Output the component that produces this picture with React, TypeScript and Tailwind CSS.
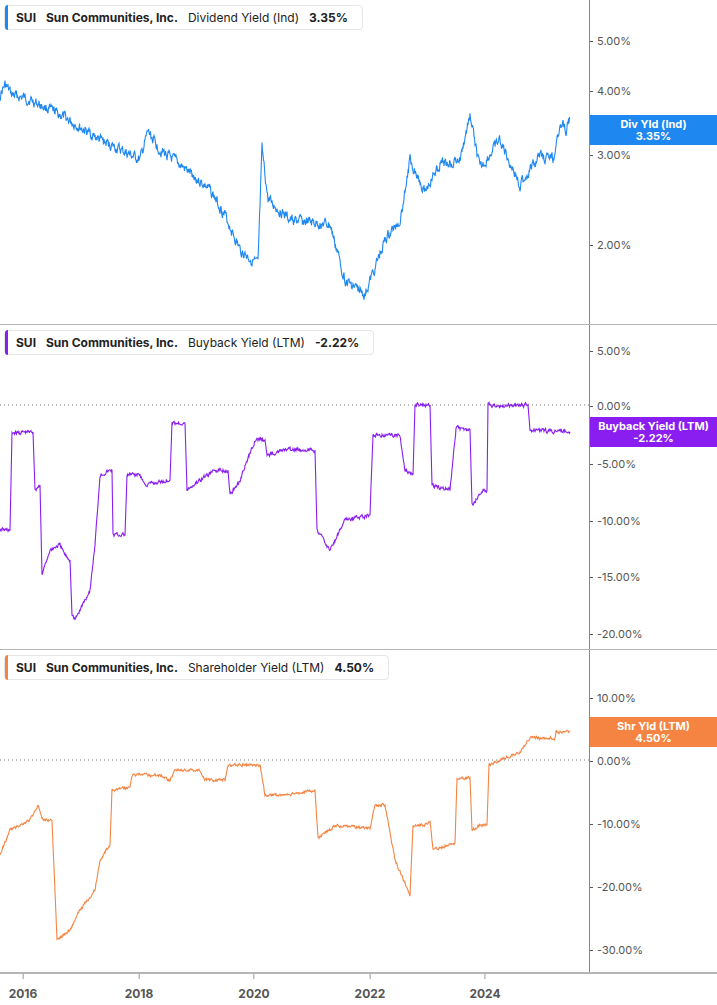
import React from 'react';

type Pt = [number, number];

// simple seeded noise so the lines look like daily data
function makePath(pts: Pt[], top: number, amp: number, seed: number) {
  let s = seed;
  const rnd = () => {
    s = (s * 9301 + 49297) % 233280;
    return s / 233280 - 0.5;
  };
  const out: string[] = [];
  let drift = 0;
  for (let i = 0; i < pts.length - 1; i++) {
    const [x0, y0] = pts[i];
    const [x1, y1] = pts[i + 1];
    const steps = Math.max(1, Math.round((x1 - x0) * 2));
    for (let k = 0; k < steps; k++) {
      const t = k / steps;
      drift = drift * 0.5 + rnd() * amp;
      const y = y0 + (y1 - y0) * t - top + (x1 - x0 < 3 ? 0 : drift);
      out.push(`${(x0 + (x1 - x0) * t).toFixed(1)},${y.toFixed(1)}`);
    }
  }
  const last = pts[pts.length - 1];
  out.push(`${last[0]},${last[1] - top}`);
  return 'M' + out.join(' L');
}

const blue: Pt[] = [[0,95],[5,85],[12,95],[30,100],[60,115],[100,140],[140,160],[148,132],[160,150],[180,165],[210,190],[225,215],[240,250],[258,265],[262,150],[268,200],[290,220],[330,225],[345,280],[365,295],[385,240],[400,220],[410,160],[425,190],[440,165],[460,160],[470,115],[480,170],[500,140],[520,185],[540,155],[555,160],[560,120],[566,130],[570,118]];
const purple: Pt[] = [[0,530],[10,530],[12,433],[33,432],[35,490],[40,485],[42,575],[50,550],[60,545],[65,555],[70,560],[72,615],[75,620],[90,590],[95,545],[100,475],[112,470],[113,535],[125,535],[127,475],[140,475],[145,485],[170,480],[172,423],[185,423],[187,490],[200,480],[215,470],[228,470],[230,495],[240,480],[255,440],[265,440],[267,455],[285,450],[315,450],[317,530],[330,550],[345,520],[370,515],[373,435],[400,435],[405,470],[413,475],[415,405],[430,405],[432,485],[450,490],[456,428],[470,430],[472,505],[483,490],[487,490],[488,405],[528,405],[530,430],[570,432]];
const orange: Pt[] = [[0,855],[10,830],[30,820],[38,805],[42,820],[52,820],[57,940],[70,930],[80,910],[95,890],[100,860],[110,845],[112,790],[130,787],[132,775],[160,775],[170,780],[175,770],[200,770],[205,780],[225,780],[228,765],[260,765],[265,795],[290,795],[315,790],[318,838],[335,826],[370,828],[375,805],[385,805],[395,860],[410,895],[413,825],[425,825],[430,820],[433,850],[450,845],[455,843],[457,778],[470,778],[472,830],[480,825],[487,825],[489,765],[500,760],[520,752],[530,738],[555,738],[556,732],[570,732]];

type Panel = {
  h: number; top: number; color: string; label: string; value: string;
  pts: Pt[]; amp: number; ticks: [string, number][]; badge: [string, string, number];
  zero?: number;
};

const panels: Panel[] = [
  { h: 325, top: 0, color: '#1e88f0', label: 'Dividend Yield (Ind)', value: '3.35%', pts: blue, amp: 9,
    ticks: [['5.00%', 40], ['4.00%', 90], ['3.00%', 154], ['2.00%', 244]], badge: ['Div Yld (Ind)', '3.35%', 115] },
  { h: 325, top: 325, color: '#8a1ef0', label: 'Buyback Yield (LTM)', value: '-2.22%', pts: purple, amp: 3.5,
    ticks: [['5.00%', 25], ['0.00%', 80], ['-5.00%', 138], ['-10.00%', 195], ['-15.00%', 251], ['-20.00%', 308]], badge: ['Buyback Yield (LTM)', '-2.22%', 92], zero: 80 },
  { h: 324, top: 650, color: '#f58442', label: 'Shareholder Yield (LTM)', value: '4.50%', pts: orange, amp: 2.5,
    ticks: [['10.00%', 47], ['0.00%', 110], ['-10.00%', 173], ['-20.00%', 236], ['-30.00%', 299]], badge: ['Shr Yld (LTM)', '4.50%', 67], zero: 110 },
];

function ChartPanel({ p, seed, last }: { p: Panel; seed: number; last: boolean }) {
  return (
    <div className={`flex ${last ? 'border-b-2' : 'border-b'} border-[#b5b5b5]`} style={{ height: p.h }}>
      <div className="relative w-[590px] border-r border-[#888]">
        <svg className="absolute inset-0" width="590" height={p.h}>
          {p.zero !== undefined && (
            <line x1="0" x2="590" y1={p.zero} y2={p.zero} stroke="#777" strokeWidth="1" strokeDasharray="1 3" />
          )}
          <path d={makePath(p.pts, p.top, p.amp, seed)} fill="none" stroke={p.color} strokeWidth="1.1" />
        </svg>
        <div className="absolute left-[4px] top-[5px] h-[25px] pr-[14px] bg-white border border-[#e6e6e6] rounded-sm flex items-center gap-[10px] text-[12px] text-[#222] whitespace-nowrap">
          <div className="w-[3px] h-[25px] rounded-l-sm -mr-[2px]" style={{ background: p.color }} />
          <span className="font-bold">SUI</span>
          <span className="font-bold">Sun Communities, Inc.</span>
          <span>{p.label}</span>
          <span className="font-bold">{p.value}</span>
        </div>
      </div>
      <div className="relative flex-1 text-[11px] text-[#555]">
        {p.ticks.map(([t, y]) => (
          <div key={t} className="absolute left-0 flex items-center gap-[4px]" style={{ top: y - 7 }}>
            <div className="w-[3px] h-[1px] bg-[#555]" />
            <span>{t}</span>
          </div>
        ))}
        <div className="absolute left-0 right-0 h-[30px] flex flex-col items-center justify-center text-white font-bold text-[11px] leading-[12px]"
          style={{ top: p.badge[2], background: p.color }}>
          <span>{p.badge[0]}</span>
          <span>{p.badge[1]}</span>
        </div>
      </div>
    </div>
  );
}

export default function App() {
  return (
    <div className="w-[717px] h-[1005px] bg-white overflow-hidden" style={{ fontFamily: 'Inter, "Liberation Sans", sans-serif' }}>
      {panels.map((p, i) => (
        <ChartPanel key={i} p={p} seed={17 + i * 31} last={i === 2} />
      ))}
      <div className="relative w-[590px] h-[29px] text-[12px] font-bold text-[#555]">
        {[['2016', 23], ['2018', 139], ['2020', 254], ['2022', 370], ['2024', 485]].map(([l, x]) => (
          <div key={l as string} className="absolute top-0 flex flex-col items-center -translate-x-1/2" style={{ left: x as number }}>
            <div className="w-[1px] h-[5px] bg-[#999]" />
            <span className="mt-[6px]">{l}</span>
          </div>
        ))}
      </div>
    </div>
  );
}
